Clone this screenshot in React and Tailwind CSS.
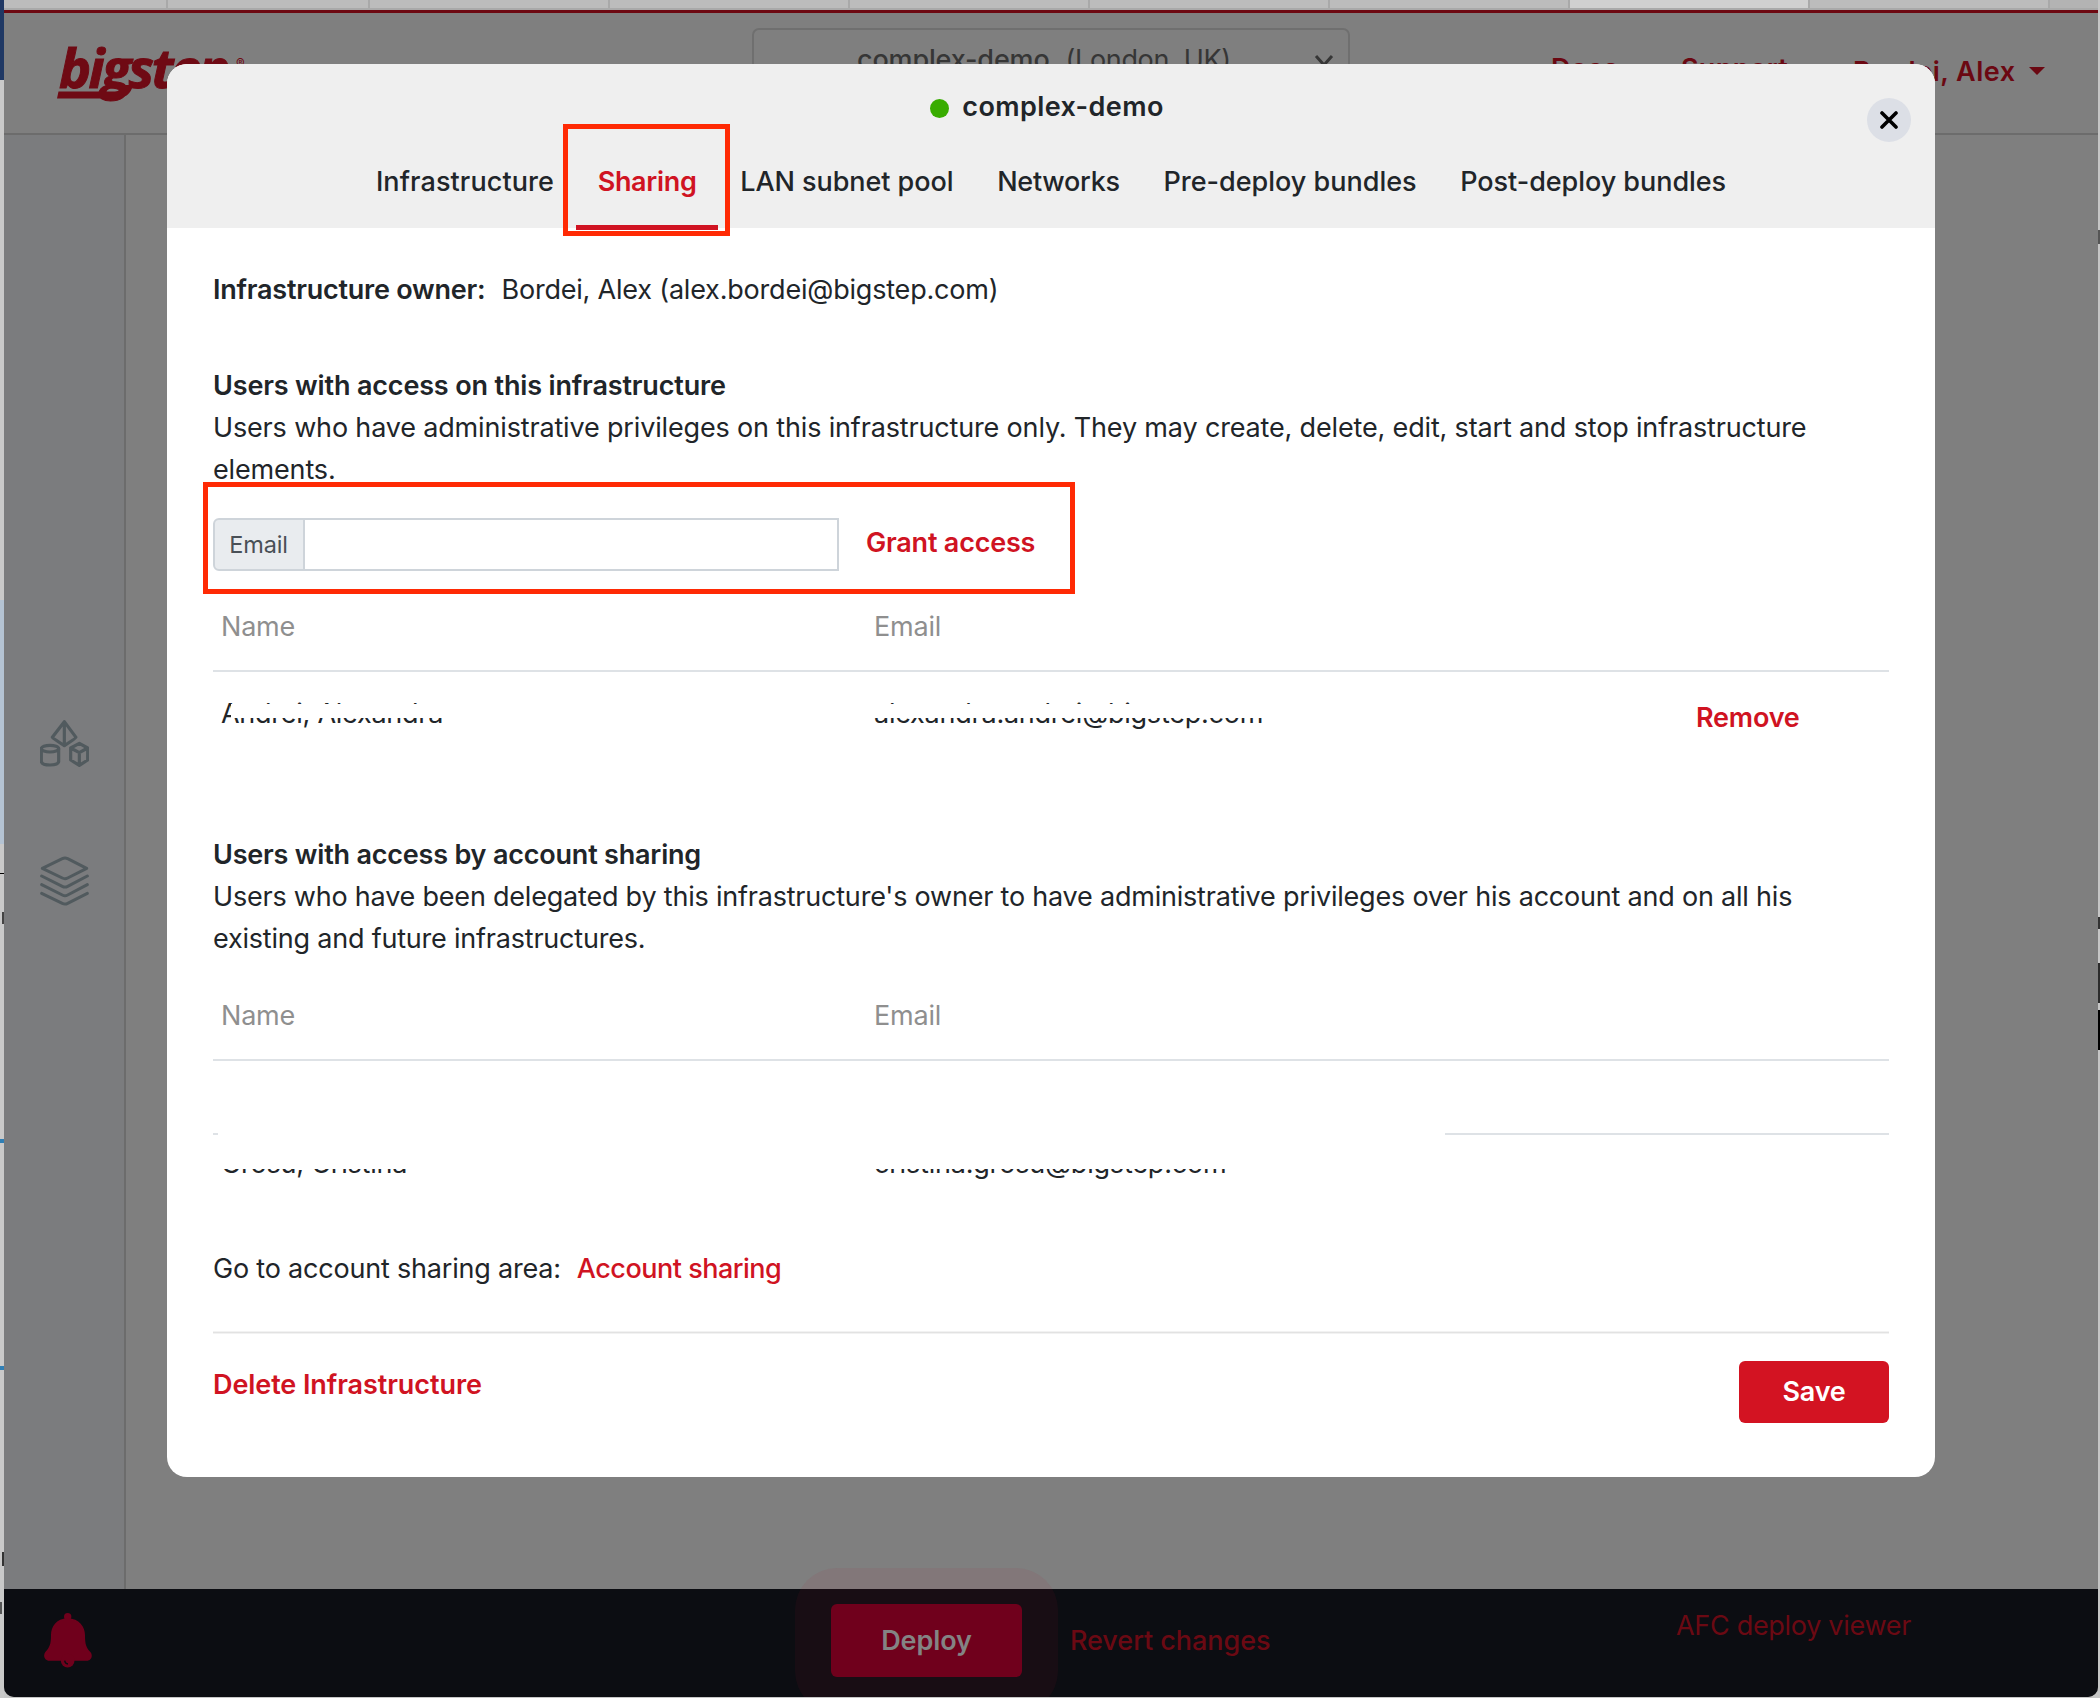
import React from 'react';

const TABS = [
  { label: 'Infrastructure', tracking: 'tracking-[0.1px]' },
  { label: 'Sharing', tracking: 'tracking-[-0.3px]', active: true },
  { label: 'LAN subnet pool', tracking: 'tracking-[-0.05px]' },
  { label: 'Networks', tracking: 'tracking-[-0.25px]' },
  { label: 'Pre-deploy bundles', tracking: 'tracking-[0px]' },
  { label: 'Post-deploy bundles', tracking: 'tracking-[-0.05px]' },
];

function BrowserTabs() {
  return (
    <div className="flex h-[10px] shrink-0 border-b-2 border-[#a9a9a9] bg-[#bcbcbc]">
      <div className="w-[164px] border-r-2 border-[#a9a9a9]" />
      <div className="w-[202px] border-r-2 border-[#a9a9a9]" />
      <div className="w-[240px] border-r-2 border-[#a9a9a9]" />
      <div className="w-[240px] border-r-2 border-[#a9a9a9]" />
      <div className="w-[240px] border-r-2 border-[#a9a9a9]" />
      <div className="w-[240px] border-r-2 border-[#a9a9a9]" />
      <div className="w-[240px] border-r-2 border-[#a9a9a9]" />
      <div className="w-[240px] border-r-2 border-[#a9a9a9] bg-[#d0d0d0]" />
      <div className="w-[240px] border-r-2 border-[#a9a9a9]" />
      <div className="flex-1 bg-[#b3b3b3]" />
    </div>
  );
}

function Logo() {
  return (
    <div className="relative h-[72px] w-[200px]">
      <span className="absolute left-0 top-0 font-['Open_Sans',sans-serif] text-[54px] leading-[72px] font-bold italic tracking-[-2.6px] text-[#6f0a14] [-webkit-text-stroke:1px_#6f0a14]">
        bigstep
      </span>
      <span className="absolute left-[177px] top-[24px] text-[13px] leading-[16px] text-[#6f0a14]">®</span>
      <svg className="absolute left-[-2px] top-[54px]" width="82" height="16" viewBox="0 0 82 16">
        <path d="M1.5 6.5H58Q64 6.5 66 0H76Q73 13.5 58 13.5H0Z" fill="#6f0a14" />
      </svg>
    </div>
  );
}

function PageHeader() {
  return (
    <div className="flex h-[125px] shrink-0 items-start border-t-[3px] border-b-2 border-t-[#6d0811] border-b-[#6c6c6c] text-[#6b0812]">
      <div className="ml-[55px] mt-[18px]">
        <Logo />
      </div>
      <div className="ml-[493px] mt-[15px] flex h-[76px] w-[598px] items-start rounded-[7px] border-2 border-[#6f6f6f] pl-[103px] pt-[9px] text-[#363636]">
        <span className="font-medium tracking-[-0.15px]">complex-demo</span>
        <span className="ml-[16px] tracking-[-0.36px]">(London, UK)</span>
        <svg className="ml-[83px] mt-[15px]" width="20" height="16" viewBox="0 0 20 16" fill="none" stroke="#363636" strokeWidth="3">
          <path d="M2 2L10 11L18 2" />
        </svg>
      </div>
      <span className="ml-[201px] mt-[35px] w-[130px] font-semibold tracking-[0.2px]">Docs</span>
      <span className="mt-[35px] w-[172px] font-semibold tracking-[0.3px]">Support</span>
      <span className="mt-[38px] font-semibold tracking-[0.5px] whitespace-nowrap">Bordei, Alex</span>
      <svg className="ml-[13px] mt-[54px]" width="16" height="8" viewBox="0 0 16 8">
        <path d="M0 0H16L8 8Z" fill="#6b0812" />
      </svg>
    </div>
  );
}

function Sidebar() {
  return (
    <div className="flex w-[122px] shrink-0 flex-col items-start border-r-2 border-[#6c6c6c] bg-[#7b7c7e] pl-[36px] pt-[585px]">
      <svg width="49" height="47" viewBox="120 120 147 141" fill="none" stroke="#515a5e" strokeWidth="9.5" strokeLinejoin="round" strokeLinecap="round">
        <path d="M193 125L228 172Q228 175 193 197Q158 175 157 172ZM193 125V197" />
        <ellipse cx="150" cy="206" rx="26" ry="10" />
        <path d="M124 206V245Q127 255 150 255Q174 255 176 245V206" />
        <path d="M238 190L263 204V240L238 256L212 240V204ZM212 204L238 218L263 204M238 218V256" />
      </svg>
      <svg className="mt-[89px]" width="49" height="50" viewBox="120 529 147 150" fill="none" stroke="#515a5e" strokeWidth="9" strokeLinejoin="round" strokeLinecap="round">
        <path d="M187 537Q195 533 203 537L260 566L203 595Q195 599 187 595L127 566Z" />
        <path d="M125 589L187 620Q195 624 203 620L262 589" />
        <path d="M125 615L187 646Q195 650 203 646L262 615" />
        <path d="M125 641L187 671Q195 675 203 671L262 641" />
      </svg>
    </div>
  );
}

function FooterBar() {
  return (
    <div className="relative flex h-[108px] shrink-0 items-start bg-[#0c0d12]">
      <svg className="ml-[40px] mt-[24px]" width="48" height="55" viewBox="132 399 144 165">
        <g fill="#70001c">
          <circle cx="203" cy="410" r="11" />
          <path d="M203 415C168 415 153 442 153 465C153 495 148 503 136 516C128 526 134 542 148 542H260C274 542 280 526 271 516C259 503 255 495 255 465C255 442 238 415 203 415Z" />
          <circle cx="203" cy="542" r="20.5" />
        </g>
        <path d="M194 542Q195 551 204 552" fill="none" stroke="#0c0d12" strokeWidth="4" />
      </svg>
      <div className="relative ml-[739px] mt-[15px] h-[73px] w-[191px]">
        <div className="absolute inset-[-36px] rounded-[42px] bg-[#a01838]/8" />
        <div className="relative flex h-full items-center justify-center rounded-[6px] bg-[#70001c] font-semibold tracking-[-0.1px] text-[#848484]">
          Deploy
        </div>
      </div>
      <span className="ml-[48px] mt-[31px] w-[606px] font-medium tracking-[-0.05px] text-[#6b0913]">Revert changes</span>
      <span className="mt-[16px] tracking-[-0.3px] text-[#6b0913]">AFC deploy viewer</span>
    </div>
  );
}

function ModalHeader() {
  return (
    <div className="relative flex h-[164px] shrink-0 flex-col items-center rounded-t-[20px] bg-[#efefef] pt-[22px]">
      <div className="mr-[8px] flex h-[42px] items-center gap-[13px]">
        <span className="mt-[2px] size-[19px] rounded-full bg-[#38ac00]" />
        <span className="font-semibold tracking-[0.4px]">complex-demo</span>
      </div>
      <div className="mt-[33px] flex">
        {TABS.map((t) => (
          <div
            key={t.label}
            className={
              t.active
                ? 'h-[69px] border-b-[5px] border-[#d01322] px-[21.8px] font-semibold text-[#d01322]'
                : 'h-[69px] px-[21.8px] font-medium'
            }
          >
            <span className={t.tracking}>{t.label}</span>
          </div>
        ))}
      </div>
      <div className="absolute right-[24px] top-[34px] flex size-[44px] items-center justify-center rounded-full bg-[#dcdfe6]">
        <svg width="18" height="18" viewBox="0 0 18 18" stroke="#000" strokeWidth="3.6" strokeLinecap="round">
          <path d="M2 2L16 16M16 2L2 16" />
        </svg>
      </div>
      <div className="absolute left-[396px] top-[60px] h-[112px] w-[167px] border-[5px] border-[#ff2a04]" />
    </div>
  );
}

function TableHead() {
  return (
    <div className="flex h-[67px] items-start border-b-2 border-[#dee2e6] pl-[8px] pt-px text-[#8f8f8f]">
      <span className="w-[653px]">Name</span>
      <span>Email</span>
    </div>
  );
}

function Modal() {
  return (
    <div className="absolute left-[167px] top-[64px] flex h-[1413px] w-[1768px] flex-col rounded-[20px] bg-white text-[#212529]">
      <ModalHeader />
      <div className="flex flex-col px-[46px] pt-[41px] tracking-[-0.2px]">
        <div className="flex gap-[16px]">
          <span className="font-semibold tracking-[-0.23px]">Infrastructure owner:</span>
          <span>Bordei, Alex (alex.bordei@bigstep.com)</span>
        </div>

        <h2 className="mt-[54px] font-semibold tracking-[-0.16px]">Users with access on this infrastructure</h2>
        <p className="tracking-[-0.16px] whitespace-nowrap">
          Users who have administrative privileges on this infrastructure only. They may create, delete, edit, start and stop infrastructure
          <br />
          elements.
        </p>

        <div className="relative mt-[27px] flex h-[53px] items-start">
          <div className="flex h-[53px] w-[92px] items-center justify-center rounded-l-[6px] border-2 border-[#ced4da] bg-[#e9ecef] pr-px text-[23.5px] text-[#495057]">
            Email
          </div>
          <div className="h-[53px] w-[534px] border-2 border-l-0 border-[#ced4da]" />
          <span className="ml-[27px] mt-[4px] font-semibold tracking-[-0.2px] text-[#d01322]">Grant access</span>
          <div className="absolute left-[-10px] top-[-36px] h-[112px] w-[872px] border-[5px] border-[#ff2a04]" />
        </div>

        <div className="mt-[34px]">
          <TableHead />
          <div className="relative flex h-[84px] items-start pl-[8px] pt-[21px]">
            <span className="w-[653px] tracking-[-0.26px]">Andrei, Alexandra</span>
            <span className="w-[822px] tracking-[-0.24px]">alexandra.andrei@bigstep.com</span>
            <span className="mt-[4px] font-semibold tracking-[-0.2px] text-[#d01322]">Remove</span>
            <div className="absolute left-[18px] top-[32px] h-[14px] w-[1200px] bg-white" />
          </div>
        </div>

        <h2 className="mt-[78px] font-semibold">Users with access by account sharing</h2>
        <p className="tracking-[-0.21px] whitespace-nowrap">
          Users who have been delegated by this infrastructure's owner to have administrative privileges over his account and on all his
          <br />
          existing and future infrastructures.
        </p>

        <div className="mt-[34px]">
          <TableHead />
          <div className="flex h-[74px] items-end justify-between">
            <div className="h-[2px] w-[5px] bg-[#dee2e6]" />
            <div className="h-[2px] w-[444px] bg-[#dee2e6]" />
          </div>
          <div className="relative flex h-[66px] items-start pl-[8px] pt-[8px]">
            <span className="w-[653px] tracking-[-0.2px]">Grosu, Cristina</span>
            <span>cristina.grosu@bigstep.com</span>
            <div className="absolute left-0 top-[8px] h-[26px] w-[1300px] bg-white" />
          </div>
        </div>

        <div className="mt-[47px] flex gap-[16px]">
          <span>Go to account sharing area:</span>
          <span className="font-medium tracking-[-0.5px] text-[#d01322]">Account sharing</span>
        </div>

        <div className="mt-[41px] h-[3px] border-y border-[#f2f2f2] bg-[#e2e2e2]" />
        <div className="mt-[27px] flex items-start justify-between">
          <span className="mt-[3px] font-semibold tracking-[-0.08px] text-[#d01322]">Delete Infrastructure</span>
          <div className="flex h-[62px] w-[150px] items-center justify-center rounded-[6px] bg-[#d31322] font-semibold text-white">
            Save
          </div>
        </div>
      </div>
    </div>
  );
}

export default function App() {
  return (
    <div className="relative flex h-[1698px] w-[2100px] overflow-hidden bg-[#c6c6c6] font-['Inter',sans-serif] text-[27px] leading-[42px]">
      <div className="flex w-[4px] shrink-0 flex-col bg-[#c9c9c9]">
        <div className="h-[80px] bg-[#1f3864]" />
        <div className="mt-[520px] h-[244px] bg-[#b4c3d3]" />
        <div className="mt-[29px] h-px bg-black" />
        <div className="mt-[38px] ml-[2px] h-[12px] bg-[#444]" />
        <div className="mt-[215px] h-[4px] bg-[#2f7fb5]" />
        <div className="mt-[223px] h-[4px] bg-[#2f7fb5]" />
        <div className="mt-[182px] ml-[2px] h-[14px] bg-[#333]" />
        <div className="mt-[36px] mr-[2px] h-[12px] bg-[#555]" />
      </div>
      <div className="flex h-[1697px] w-[2094px] flex-col overflow-hidden rounded-b-[10px] bg-[#7f7f7f]">
        <BrowserTabs />
        <PageHeader />
        <div className="flex flex-1">
          <Sidebar />
        </div>
        <FooterBar />
      </div>
      <div className="flex w-[2px] flex-col bg-[#c6c6c6]">
        <div className="mt-[230px] h-[14px] bg-[#555]" />
        <div className="mt-[673px] h-[12px] bg-[#333]" />
        <div className="mt-[34px] h-[40px] bg-[#2b2b2b]" />
        <div className="mt-[7px] h-[40px] bg-black" />
      </div>
      <Modal />
    </div>
  );
}
